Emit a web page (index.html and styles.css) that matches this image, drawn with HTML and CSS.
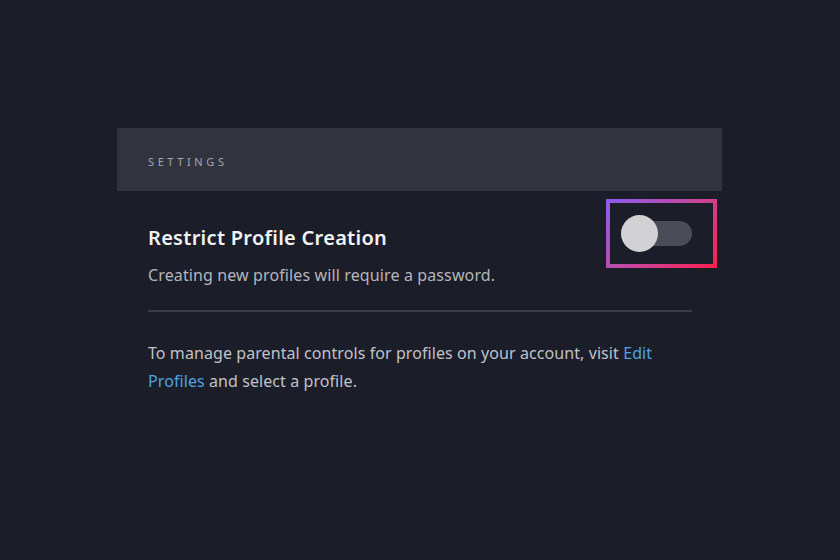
FILE: index.html
```html
<!DOCTYPE html>
<html>
<head>
<meta charset="utf-8">
<link rel="stylesheet" href="styles.css">
</head>
<body>
<div class="panel">
  <div class="panel-header"><span class="header-label">SETTINGS</span></div>
  <div class="panel-body">
    <div class="setting-row">
      <div class="setting-text">
        <div class="setting-title">Restrict Profile Creation</div>
        <div class="setting-desc">Creating new profiles will require a password.</div>
      </div>
      <div class="toggle" role="switch" aria-checked="false">
        <span class="toggle-track"></span>
        <span class="toggle-knob"></span>
      </div>
    </div>
    <div class="divider"></div>
    <p class="note">To manage parental controls for profiles on your account, visit <a class="link" href="#">Edit Profiles</a> and select a profile.</p>
  </div>
</div>
</body>
</html>
```
FILE: styles.css
```css
html, body {
  margin: 0;
  padding: 0;
  background: #1b1d29;
  height: 100%;
}
body {
  font-family: "Noto Sans", "Lato", sans-serif;
  color: #f0f0f2;
}
.panel {
  width: 605px;
  margin-left: 117px;
  padding-top: 128px;
}
.panel-header {
  height: 63px;
  box-sizing: border-box;
  padding: 3px 0 0 31px;
  background: #31343f;
  display: flex;
  align-items: center;
}
.header-label {
  font-size: 11px;
  letter-spacing: 3.6px;
  color: #a5a7ae;
}
.panel-body {
  padding: 33px 30px 0 31px;
}
.setting-row {
  display: flex;
  justify-content: space-between;
  align-items: flex-start;
}
.setting-title {
  font-size: 20px;
  line-height: 28px;
  font-weight: 600;
  letter-spacing: 0.28px;
  color: #f2f2f4;
}
.setting-desc {
  margin-top: 11px;
  font-size: 16px;
  line-height: 24px;
  letter-spacing: 0.12px;
  color: #b4b6bc;
}
.toggle {
  position: relative;
  width: 71px;
  height: 37px;
  margin-top: -9px;
}
.toggle::before {
  content: "";
  position: absolute;
  left: -15px;
  top: -16px;
  right: -25px;
  bottom: -16px;
  padding: 4px;
  background: linear-gradient(135deg, #8a5cf2 0%, #c04aa8 45%, #ff1f4d 100%);
  -webkit-mask: linear-gradient(#000 0 0) content-box, linear-gradient(#000 0 0);
  -webkit-mask-composite: xor;
  mask-composite: exclude;
}
.toggle-track {
  position: absolute;
  left: 0;
  right: 0;
  top: 6px;
  height: 25px;
  border-radius: 13px;
  background: #4a4c58;
}
.toggle-knob {
  position: absolute;
  left: 0;
  top: 0;
  width: 37px;
  height: 37px;
  border-radius: 50%;
  background: #d2d2d4;
}
.divider {
  height: 2px;
  background: #3b3e49;
  margin-top: 23px;
}
.note {
  margin: 27px 0 0;
  font-size: 16px;
  line-height: 28px;
  letter-spacing: 0.08px;
  color: #c0c2c8;
}
.link {
  color: #4fa3e0;
  text-decoration: none;
}
```
